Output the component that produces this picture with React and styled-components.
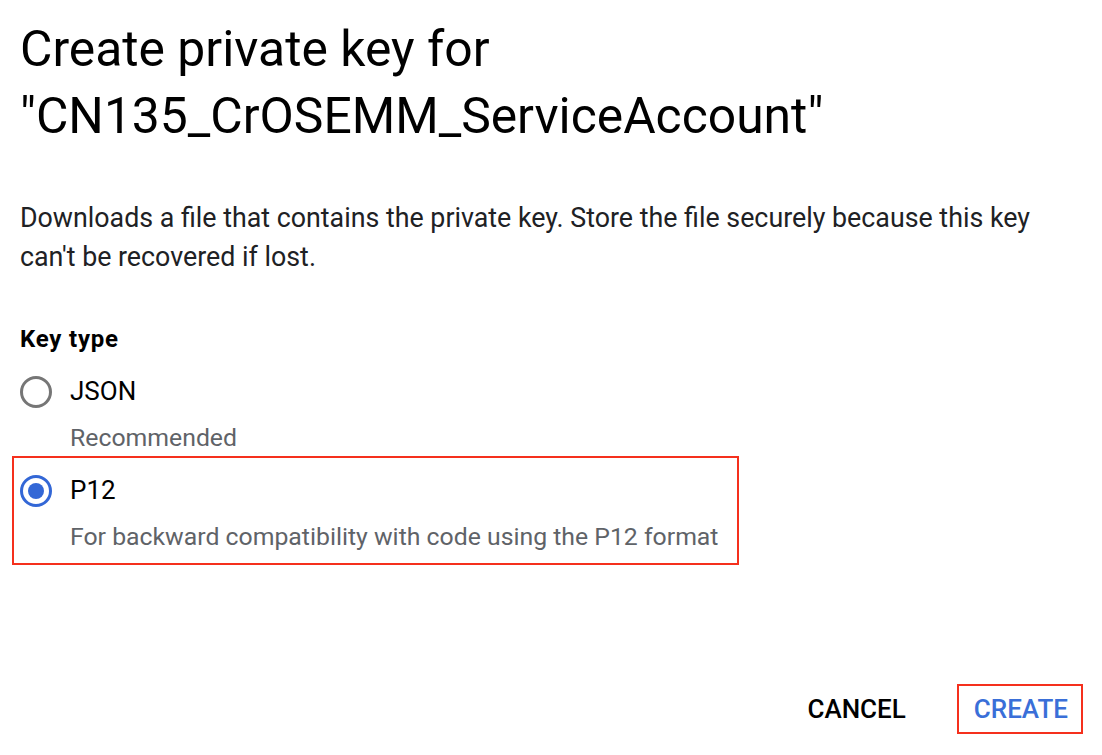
import styled, { createGlobalStyle } from "styled-components";

const GlobalStyle = createGlobalStyle`
    body {
        margin: 0;
        background: #ffffff;
        font-family: Roboto, "Noto Sans", sans-serif;
    }
`;

const options = [
    { id: "json", label: "JSON", hint: "Recommended", checked: false, marked: false },
    { id: "p12", label: "P12", hint: "For backward compatibility with code using the P12 format", checked: true, marked: true },
];

export default function App() {
    return (
        <Dialog>
            <GlobalStyle />
            <Title>Create private key for "CN135_CrOSEMM_ServiceAccount"</Title>
            <Description>
                Downloads a file that contains the private key. Store the file securely because this key can't be recovered if lost.
            </Description>
            <Label>Key type</Label>
            <OptionList>
                {options.map((o) => (
                    <Option key={o.id} marked={o.marked}>
                        <OptionRow>
                            <Radio checked={o.checked} />
                            <span>{o.label}</span>
                        </OptionRow>
                        <Hint>{o.hint}</Hint>
                    </Option>
                ))}
            </OptionList>
            <Footer>
                <Button>CANCEL</Button>
                <Button primary marked>CREATE</Button>
            </Footer>
        </Dialog>
    );
}

const Dialog = styled.div`
    padding: 16px 19px 0 20px;
    color: #202124;
`;

const Title = styled.h1`
    margin: 0;
    font-size: 49.8px;
    line-height: 67px;
    font-weight: 400;
    color: #000000;
`;

const Description = styled.p`
    margin: 49px 0 0;
    font-size: 26.8px;
    line-height: 39px;
`;

const Label = styled.div`
    margin-top: 46px;
    font-size: 24px;
    letter-spacing: 0.8px;
    line-height: 32px;
    font-weight: 700;
    color: #000000;
`;

const OptionList = styled.div`
    margin-top: 17px;
    display: flex;
    flex-direction: column;
    gap: 18px;
`;

const Option = styled.div.withConfig({ shouldForwardProp: (p) => p !== "marked" })`
    position: relative;
    width: fit-content;

    &::after {
        content: "";
        display: ${(p) => (p.marked ? "block" : "none")};
        position: absolute;
        top: -15px;
        bottom: -13px;
        left: -8px;
        right: -21px;
        border: 2px solid #f5301d;
        pointer-events: none;
    }
`;

const OptionRow = styled.div`
    display: flex;
    align-items: center;
    gap: 18px;
    font-size: 26px;
    line-height: 39px;
    color: #000000;
`;

const Radio = styled.span`
    box-sizing: border-box;
    width: 32px;
    height: 32px;
    border-radius: 50%;
    border: 3.5px solid ${(p) => (p.checked ? "#3367d6" : "#767676")};
    display: flex;
    align-items: center;
    justify-content: center;

    &::after {
        content: "";
        display: ${(p) => (p.checked ? "block" : "none")};
        width: 16px;
        height: 16px;
        border-radius: 50%;
        background: #3367d6;
    }
`;

const Hint = styled.div`
    margin-top: 12px;
    padding-left: 50px;
    font-size: 24.8px;
    line-height: 30px;
    color: #5f6368;
`;

const Footer = styled.div`
    margin-top: 132px;
    display: flex;
    justify-content: flex-end;
    gap: 36px;
`;

const Button = styled.button.withConfig({ shouldForwardProp: (p) => p !== "marked" && p !== "primary" })`
    font-family: Roboto, "Noto Sans", sans-serif;
    font-size: 26px;
    line-height: 39px;
    font-weight: 500;
    background: none;
    padding: 3.5px 13px 3.5px 15px;
    border: 2px solid ${(p) => (p.marked ? "#f5301d" : "transparent")};
    color: ${(p) => (p.primary ? "#3a6fd8" : "#000000")};
    cursor: pointer;
`;
